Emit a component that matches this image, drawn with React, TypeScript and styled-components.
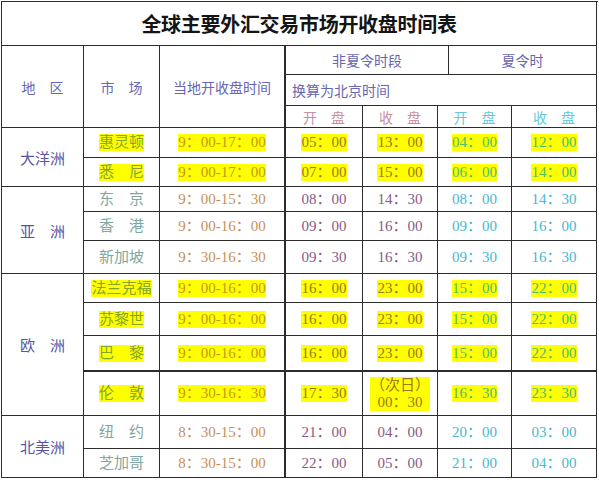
import React from "react";
import styled, { createGlobalStyle, css } from "styled-components";

const Global = createGlobalStyle`
  html, body { margin: 0; padding: 0; background: #ffffff; }
  body { font-family: "Liberation Serif", "Noto Sans CJK SC", serif; }
`;

const LINE = "#2c2c2c";

const Sheet = styled.div`
  margin: 1px 0 0 1px;
  width: 597px;
  box-sizing: border-box;
  display: grid;
  grid-template-columns: 82px 76px 126px 77px 75px 11px 63px 85px;
  grid-template-rows: 44px 29px 31px 22px 30px 29px 25px 29px 33px 29px 33px 36px 44px 33px 29px;
  border-top: 1px solid ${LINE};
  border-left: 1px solid ${LINE};
  font-family: "Liberation Serif", "Noto Sans CJK SC", serif;
`;

type CellProps = {
  $cols?: number;
  $rows?: number;
  $align?: "left" | "center";
  $thickRight?: boolean;
  $thickBottom?: boolean;
};

const Cell = styled.div<CellProps>`
  box-sizing: border-box;
  grid-column: span ${(p) => p.$cols ?? 1};
  grid-row: span ${(p) => p.$rows ?? 1};
  border-right: ${(p) => (p.$thickRight ? 2 : 1)}px solid ${LINE};
  border-bottom: ${(p) => (p.$thickBottom ? 2 : 1)}px solid ${LINE};
  display: flex;
  align-items: center;
  justify-content: ${(p) => (p.$align === "left" ? "flex-start" : "center")};
  padding: ${(p) => (p.$align === "left" ? "0 0 0 6px" : "0")};
  text-align: center;
  font-size: 15px;
  white-space: nowrap;
`;

const Title = styled.div`
  font-family: "Noto Sans CJK SC", sans-serif;
  font-size: 20px;
  font-weight: 700;
  color: #141414;
  letter-spacing: -0.3px;
`;

const HeadText = styled.span`
  font-size: 14px;
  color: #6666b2;
`;

const ColHead = styled.span<{ $summer?: boolean }>`
  font-size: 14px;
  color: ${(p) => (p.$summer ? "#62cadb" : "#c98ea2")};
`;

const Region = styled.span`
  font-size: 15px;
  color: #5656a6;
`;

type Tone = "market" | "local" | "winter" | "summer";

const tones: Record<Tone, { plain: string; hot: string }> = {
  market: { plain: "#7fa8a0", hot: "#86a62a" },
  local: { plain: "#c98f58", hot: "#c49a14" },
  winter: { plain: "#8a5a86", hot: "#9c7a22" },
  summer: { plain: "#46b8d2", hot: "#4cc06c" },
};

const Value = styled.span<{ $tone: Tone; $hot?: boolean }>`
  font-size: 15px;
  line-height: 17px;
  color: ${(p) => (p.$hot ? tones[p.$tone].hot : tones[p.$tone].plain)};
  ${(p) =>
    p.$hot &&
    css`
      background: #ffff00;
    `}
`;

type Row = {
  market: string;
  local: string;
  w1: React.ReactNode;
  w2: React.ReactNode;
  s1: string;
  s2: string;
  hot?: boolean;
  thickBottom?: boolean;
};

type Group = { region: string; rows: Row[] };

const groups: Group[] = [
  {
    region: "大洋洲",
    rows: [
      { market: "惠灵顿", local: "9：00-17：00", w1: "05：00", w2: "13：00", s1: "04：00", s2: "12：00", hot: true },
      { market: "悉　尼", local: "9：00-17：00", w1: "07：00", w2: "15：00", s1: "06：00", s2: "14：00", hot: true },
    ],
  },
  {
    region: "亚　洲",
    rows: [
      { market: "东　京", local: "9：00-15：30", w1: "08：00", w2: "14：30", s1: "08：00", s2: "14：30" },
      { market: "香　港", local: "9：00-16：00", w1: "09：00", w2: "16：00", s1: "09：00", s2: "16：00" },
      { market: "新加坡", local: "9：30-16：30", w1: "09：30", w2: "16：30", s1: "09：30", s2: "16：30" },
    ],
  },
  {
    region: "欧　洲",
    rows: [
      { market: "法兰克福", local: "9：00-16：00", w1: "16：00", w2: "23：00", s1: "15：00", s2: "22：00", hot: true },
      { market: "苏黎世", local: "9：00-16：00", w1: "16：00", w2: "23：00", s1: "15：00", s2: "22：00", hot: true },
      { market: "巴　黎", local: "9：00-16：00", w1: "16：00", w2: "23：00", s1: "15：00", s2: "22：00", hot: true, thickBottom: true },
      {
        market: "伦　敦",
        local: "9：30-16：30",
        w1: "17：30",
        w2: (
          <>
            （次日）
            <br />
            00：30
          </>
        ),
        s1: "16：30",
        s2: "23：30",
        hot: true,
      },
    ],
  },
  {
    region: "北美洲",
    rows: [
      { market: "纽　约", local: "8：30-15：00", w1: "21：00", w2: "04：00", s1: "20：00", s2: "03：00" },
      { market: "芝加哥", local: "8：30-15：00", w1: "22：00", w2: "05：00", s1: "21：00", s2: "04：00" },
    ],
  },
];

export default function App() {
  return (
    <>
      <Global />
      <Sheet>
        <Cell $cols={8}>
          <Title>全球主要外汇交易市场开收盘时间表</Title>
        </Cell>

        <Cell $rows={3}>
          <HeadText>地　区</HeadText>
        </Cell>
        <Cell $rows={3}>
          <HeadText>市　场</HeadText>
        </Cell>
        <Cell $rows={3} $thickRight>
          <HeadText>当地开收盘时间</HeadText>
        </Cell>
        <Cell $cols={3}>
          <HeadText>非夏令时段</HeadText>
        </Cell>
        <Cell $cols={2}>
          <HeadText>夏令时</HeadText>
        </Cell>

        <Cell $cols={5} $align="left">
          <HeadText>换算为北京时间</HeadText>
        </Cell>

        <Cell>
          <ColHead>开　盘</ColHead>
        </Cell>
        <Cell>
          <ColHead>收　盘</ColHead>
        </Cell>
        <Cell $cols={2}>
          <ColHead $summer>开　盘</ColHead>
        </Cell>
        <Cell>
          <ColHead $summer>收　盘</ColHead>
        </Cell>

        {groups.map((g) => (
          <React.Fragment key={g.region}>
            <Cell $rows={g.rows.length}>
              <Region>{g.region}</Region>
            </Cell>
            {g.rows.map((r) => (
              <React.Fragment key={r.market}>
                <Cell $thickBottom={r.thickBottom}>
                  <Value $tone="market" $hot={r.hot}>{r.market}</Value>
                </Cell>
                <Cell $thickRight $thickBottom={r.thickBottom}>
                  <Value $tone="local" $hot={r.hot}>{r.local}</Value>
                </Cell>
                <Cell $thickBottom={r.thickBottom}>
                  <Value $tone="winter" $hot={r.hot}>{r.w1}</Value>
                </Cell>
                <Cell $thickBottom={r.thickBottom}>
                  <Value $tone="winter" $hot={r.hot}>{r.w2}</Value>
                </Cell>
                <Cell $cols={2} $thickBottom={r.thickBottom}>
                  <Value $tone="summer" $hot={r.hot}>{r.s1}</Value>
                </Cell>
                <Cell $thickBottom={r.thickBottom}>
                  <Value $tone="summer" $hot={r.hot}>{r.s2}</Value>
                </Cell>
              </React.Fragment>
            ))}
          </React.Fragment>
        ))}
      </Sheet>
    </>
  );
}
